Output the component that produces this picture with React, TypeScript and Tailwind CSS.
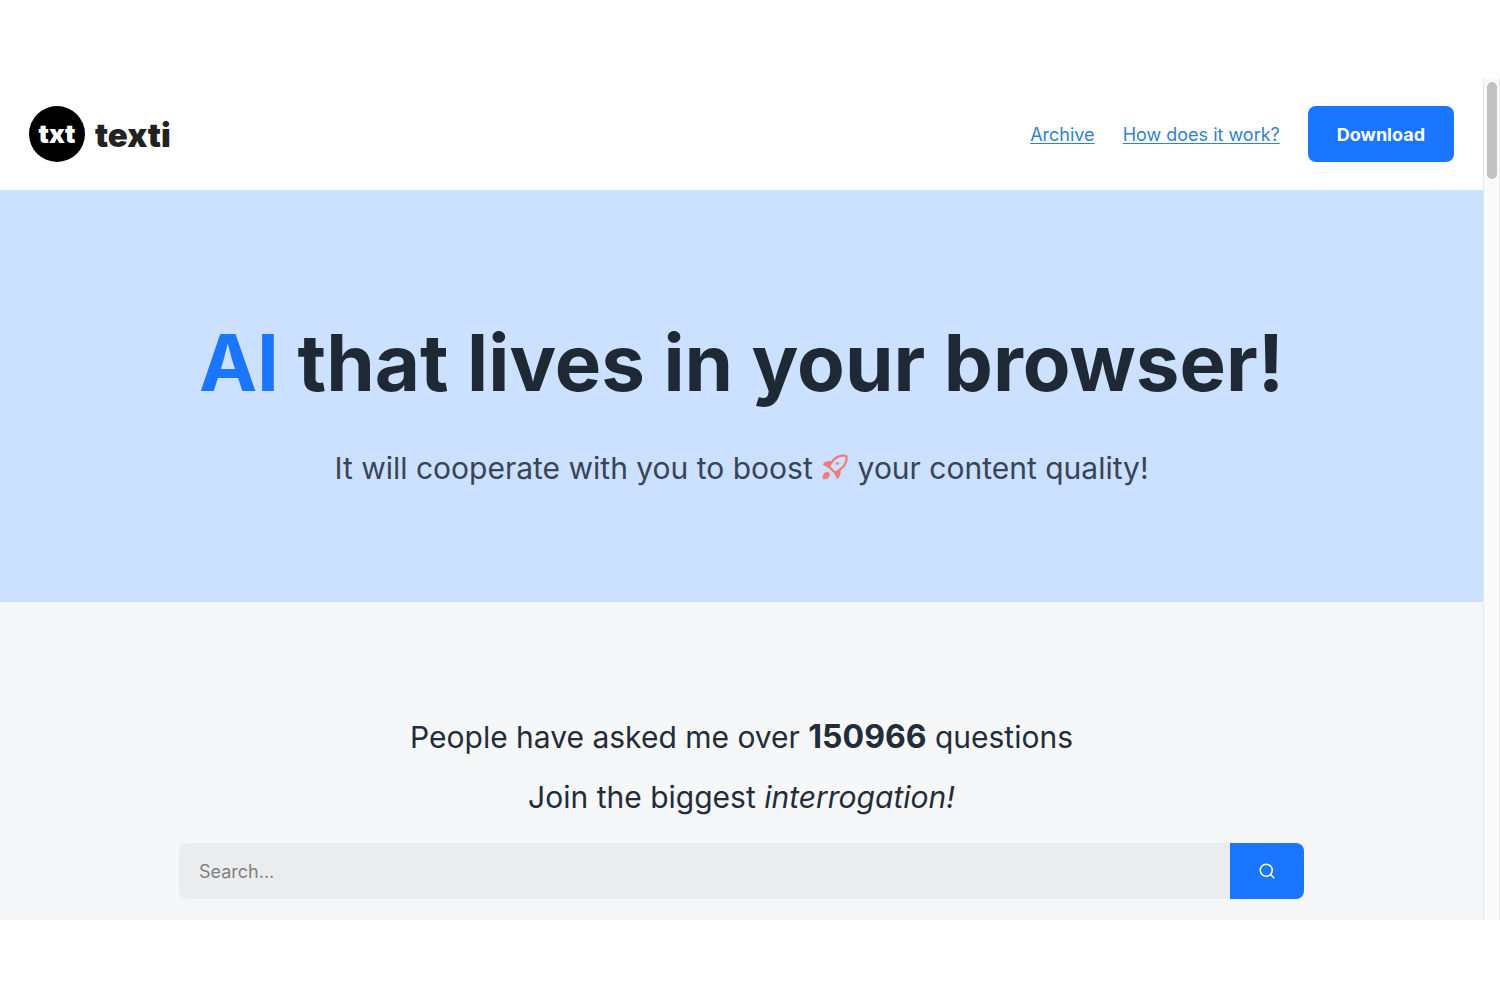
import { FiSearch } from 'react-icons/fi';

const NAV_LINKS = [
  { label: 'Archive', href: '#archive' },
  { label: 'How does it work?', href: '#how-it-works' },
];

const RocketIcon = () => (
  <svg viewBox="0 0 26 26" className="mx-px inline-block size-[26px] align-[-1px] text-[#ee7c78]" aria-hidden="true">
    <path
      d="M22.5 1.7C17.500.9 12.800 3.700 9.600 8.300L6.800 12.600l6.300 6.200 4-2.700C21.300 13.400 24.300 9.300 24.600 5 24.800 2.900 24.200 1.900 22.500 1.700Z"
      fill="none"
      stroke="currentColor"
      strokeWidth="2.2"
      strokeLinejoin="round"
    />
    <path d="M.6 10.4C3 7 6.200 6.600 10.400 7.200L6.400 14Z" fill="currentColor" />
    <path d="M12.200 19.400 18.600 15.200C19.200 19 18.200 22.400 15.400 25.400Z" fill="currentColor" />
    <path d="M.8 25.200C.2 21.400 2 18 5 18c3 .2 3.800 3 1.800 5.200C5.200 25 2.800 25.200.8 25.200Z" fill="currentColor" />
    <circle cx="15.5" cy="9.5" r="1.4" fill="currentColor" />
  </svg>
);

const Header = () => (
  <header className="flex items-center justify-between bg-white px-[29px] py-7">
    <a href="#home" className="flex items-center gap-2.5 text-[#222]">
      <span className="flex size-14 items-center justify-center rounded-full bg-black text-[26px] leading-none font-black text-white">
        txt
      </span>
      <span className="pt-0.5 text-[33px] leading-none font-black">texti</span>
    </a>
    <nav className="flex items-center gap-7">
      {NAV_LINKS.map((link) => (
        <a key={link.href} href={link.href} className="text-[18px] text-[#3182ce] underline underline-offset-2">
          {link.label}
        </a>
      ))}
      <button type="button" className="h-14 rounded-lg bg-[#1a75ff] px-[29px] text-[18px] font-bold text-white">
        Download
      </button>
    </nav>
  </header>
);

const Hero = () => (
  <section className="flex flex-col items-center bg-[#cce0ff] px-4 pt-[123px] pb-[106px] text-center">
    <h1 className="text-[78px] leading-[100px] font-bold text-[#1e2935]">
      <span className="text-[#1a75ff]">AI</span> that lives in your browser!
    </h1>
    <p className="mt-7 text-[30px] leading-[55px] text-[#374459]">
      It will cooperate with you to boost <RocketIcon /> your content quality!
    </p>
  </section>
);

const SearchSection = () => (
  <section className="bg-[#f5f7f9] px-4 pt-[105px] pb-[21px] text-center text-[#232c39]">
    <p className="text-[30px] leading-[60px]">
      People have asked me over <strong className="text-[32px] font-bold">150966</strong> questions
    </p>
    <p className="text-[30px] leading-[60px]">
      Join the biggest <em>interrogation!</em>
    </p>
    <form className="mx-auto mt-4 flex h-14 max-w-[1125px]" onSubmit={(e) => e.preventDefault()}>
      <input
        type="text"
        aria-label="Search"
        placeholder="Search..."
        className="min-w-0 flex-1 rounded-l-lg bg-[#ebecee] px-5 text-[18px] outline-none placeholder:text-[#7f8082]"
      />
      <button
        type="submit"
        aria-label="Submit search"
        className="flex w-[74px] items-center justify-center rounded-r-lg bg-[#1a75ff] text-white"
      >
        <FiSearch className="size-[18px]" />
      </button>
    </form>
  </section>
);

const App = () => (
  <div className="bg-white py-[78px] font-['Inter','Liberation_Sans',sans-serif]">
    <div className="flex">
      <main className="min-w-0 flex-1">
        <Header />
        <Hero />
        <SearchSection />
      </main>
      {/* Scroll track */}
      <div className="w-[17px] border-x border-[#e8e8e8] bg-[#fafafa] pt-1 pl-[3px]">
        <div className="h-[97px] w-2.5 rounded-full bg-[#c1c1c1]" />
      </div>
    </div>
  </div>
);

export default App;
